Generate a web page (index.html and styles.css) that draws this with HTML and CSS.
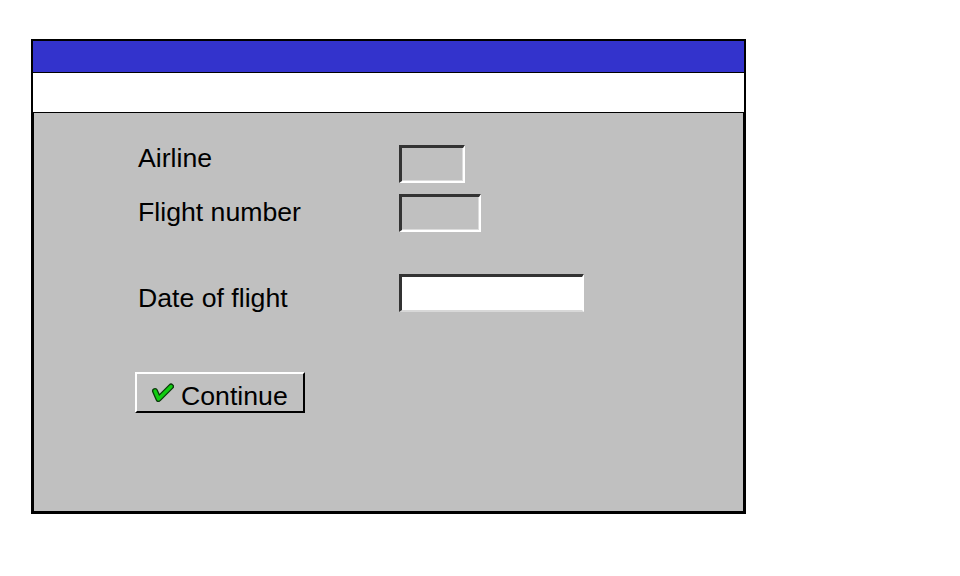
FILE: index.html
```html
<!DOCTYPE html>
<html lang="en">
<head>
<meta charset="utf-8">
<title>Flight</title>
<link rel="stylesheet" href="styles.css">
</head>
<body>
<div class="window">
  <div class="titlebar"></div>
  <div class="toolbar"></div>
  <div class="panel">
    <div class="form">
      <div class="labels">
        <div class="label">Airline</div>
        <div class="label label-2">Flight number</div>
        <div class="label label-3">Date of flight</div>
      </div>
      <div class="fields">
        <div class="field field-airline"></div>
        <div class="field field-number"></div>
        <div class="field field-date"></div>
      </div>
    </div>
    <div class="button">
      <svg class="check" width="23" height="19" viewBox="0 0 23 19">
        <polyline points="4,8 7.5,16 20,3.5" fill="none" stroke="#0a3a0a" stroke-width="6" stroke-linecap="round" stroke-linejoin="round"/>
        <polyline points="4,8 7.5,16 20,3.5" fill="none" stroke="#11cc11" stroke-width="3.4" stroke-linecap="round" stroke-linejoin="round"/>
      </svg>
      <span class="button-text">Continue</span>
    </div>
  </div>
</div>
</body>
</html>
```
FILE: styles.css
```css
html, body {
  margin: 0;
  padding: 0;
  background: #ffffff;
}

body {
  font-family: "Liberation Sans", Arial, sans-serif;
  font-size: 26.67px;
  color: #000000;
}

.window {
  margin: 39px 0 0 31px;
  width: 711px;
  height: 471px;
  border: 2px solid #000000;
  display: flex;
  flex-direction: column;
}

.titlebar {
  height: 31px;
  background: #3333cc;
  border-bottom: 1px solid #000000;
}

.toolbar {
  height: 39px;
  background: #ffffff;
}

.panel {
  flex: 1;
  background: #c0c0c0;
  border: 1px solid #000000;
  padding: 30px 0 0 101px;
}

.form {
  display: grid;
  grid-template-columns: 261px auto;
  align-items: start;
  margin-left: 3px;
}

.labels {
  display: flex;
  flex-direction: column;
}

.label {
  line-height: 30px;
  height: 30px;
  white-space: nowrap;
}

.label-2 {
  margin-top: 24px;
}

.label-3 {
  margin-top: 56px;
}

.fields {
  display: flex;
  flex-direction: column;
  align-items: flex-start;
  margin-top: 2px;
}

.field {
  box-sizing: border-box;
  height: 38px;
  border-top: 3px solid #333333;
  border-left: 3px solid #333333;
  border-right: 2px solid #ffffff;
  border-bottom: 2px solid #ffffff;
  background: #c0c0c0;
  box-shadow: inset -1px -1px 0 #dcdcdc;
}

.field-airline {
  width: 66px;
}

.field-number {
  width: 82px;
  margin-top: 11px;
}

.field-date {
  width: 185px;
  margin-top: 42px;
  background: #ffffff;
  border-right-color: #ffffff;
  border-bottom-color: #d8d8d8;
  box-shadow: none;
}

.button {
  display: inline-flex;
  align-items: flex-start;
  margin-top: 59px;
  padding: 7px 15px 0 14px;
  height: 30px;
  border-top: 2px solid #ffffff;
  border-left: 2px solid #ffffff;
  border-right: 2px solid #000000;
  border-bottom: 2px solid #000000;
  background: #c0c0c0;
}

.check {
  display: block;
  margin-top: 2px;
  margin-right: 7px;
}

.button-text {
  line-height: 30px;
  white-space: nowrap;
}
```
